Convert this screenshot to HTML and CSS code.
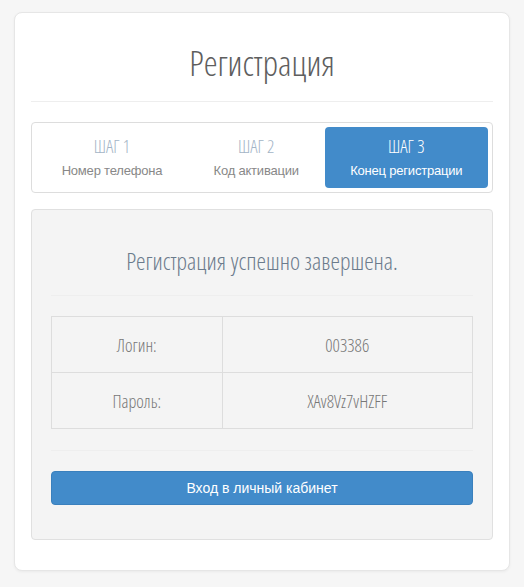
FILE: index.html
```html
<!DOCTYPE html>
<html lang="ru">
<head>
  <meta charset="UTF-8">
  <title>Регистрация</title>
  <link rel="stylesheet" href="styles.css">
</head>
<body>
  <div class="card">
    <h1 class="title">Регистрация</h1>
    <hr class="line">

    <!-- шаги регистрации -->
    <div class="steps">
      <div class="step">
        <div class="step-num">ШАГ 1</div>
        <div class="step-name">Номер телефона</div>
      </div>
      <div class="step">
        <div class="step-num">ШАГ 2</div>
        <div class="step-name">Код активации</div>
      </div>
      <div class="step active">
        <div class="step-num">ШАГ 3</div>
        <div class="step-name">Конец регистрации</div>
      </div>
    </div>

    <!-- результат -->
    <div class="well">
      <h2 class="well-title">Регистрация успешно завершена.</h2>
      <hr class="line line-top">
      <table class="info">
        <tr>
          <td>Логин:</td>
          <td>003386</td>
        </tr>
        <tr>
          <td>Пароль:</td>
          <td>XAv8Vz7vHZFF</td>
        </tr>
      </table>
      <hr class="line line-bottom">
      <button class="btn">Вход в личный кабинет</button>
    </div>
  </div>
</body>
</html>
```

FILE: styles.css
```css
body {
  margin: 0;
  padding: 12px 14px 16px;
  background-color: #f6f6f6;
  font-family: 'Liberation Sans', Arial, sans-serif;
  color: #333;
}
.card {
  background: #fff;
  border: 1px solid #e6e6e6;
  border-radius: 8px;
  box-shadow: 0 1px 3px rgba(0,0,0,0.05);
  padding: 26px 16px 30px;
}
.title, .well-title, .step-num, .info td {
  font-family: 'Open Sans', 'DejaVu Sans Condensed', sans-serif;
  font-stretch: 75%;
  font-weight: 300;
}
.title {
  margin: 0;
  text-align: center;
  font-size: 35px;
  line-height: 48px;
  color: #5e5e5e;
}
.line {
  border: none;
  border-top: 1px solid #eee;
  margin: 14px 0 20px;
}
.steps {
  display: flex;
  border: 1px solid #ddd;
  border-radius: 4px;
  padding: 4px;
}
.step {
  flex: 1 1 auto;
  text-align: center;
  padding: 8px 10px 7px;
  border-radius: 4px;
}
.step-num {
  font-size: 18px;
  line-height: 22px;
  color: #a3b4c6;
}
.step-name {
  font-size: 13px;
  line-height: 20px;
  margin-top: 4px;
  color: #888;
  letter-spacing: -0.2px;
}
.step.active {
  background-color: #428bca;
}
.step.active .step-num,
.step.active .step-name {
  color: #fff;
}
.well {
  margin-top: 16px;
  background: #f4f4f4;
  border: 1px solid #e0e0e0;
  border-radius: 4px;
  padding: 35px 19px 34px;
}
.well-title {
  margin: 0;
  text-align: center;
  font-size: 24px;
  line-height: 32px;
  color: #6b7b8c;
}
.line-top {
  margin: 18px 0 20px;
}
.line-bottom {
  margin: 21px 0 20px;
}
.info {
  width: 100%;
  border-collapse: collapse;
}
.info td {
  border: 1px solid #ddd;
  height: 53px;
  text-align: center;
  font-size: 18px;
  color: #777;
}
.info td:first-child {
  width: 40.5%;
}
.btn {
  display: block;
  width: 100%;
  height: 34px;
  border: 1px solid #3a80bd;
  border-radius: 4px;
  background-color: #428bca;
  color: #fff;
  font-family: 'Liberation Sans', Arial, sans-serif;
  font-size: 14px;
  cursor: pointer;
}
```
